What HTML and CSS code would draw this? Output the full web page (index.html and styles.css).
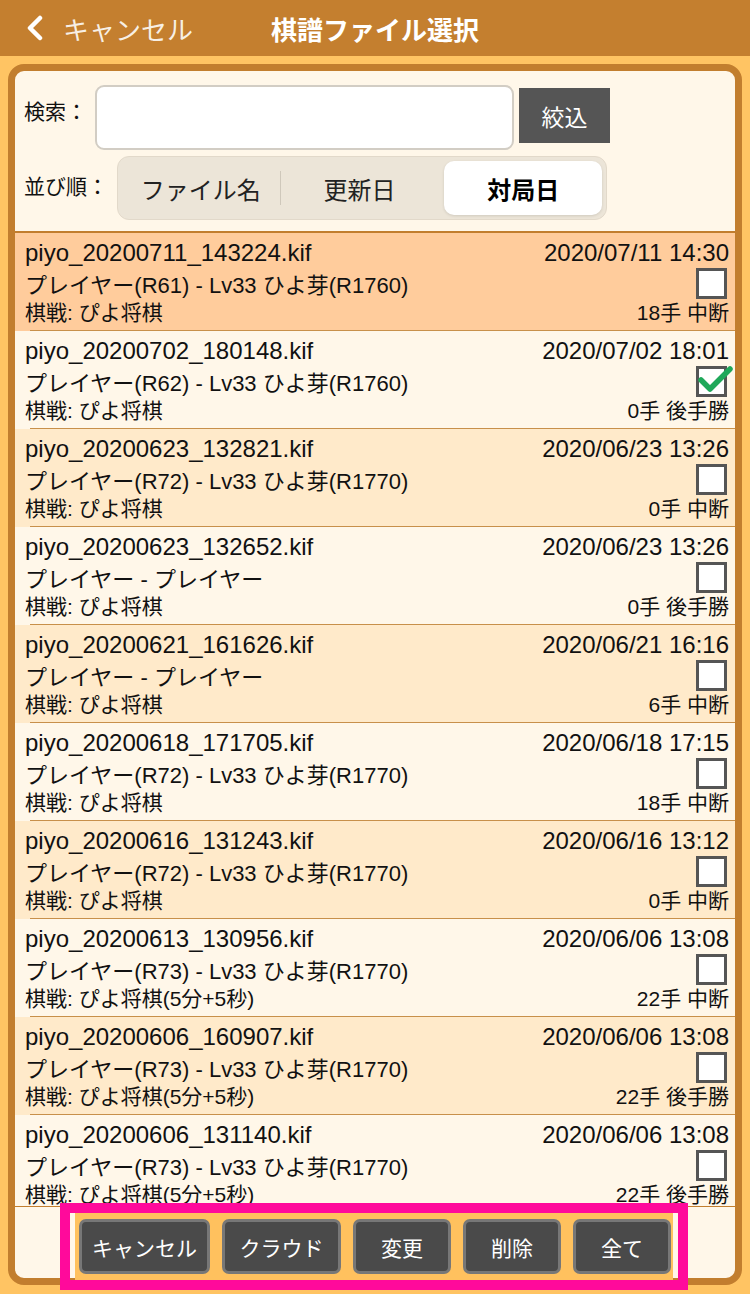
FILE: index.html
```html
<!DOCTYPE html>
<html lang="ja">

<head>
    <meta charset="UTF-8">
    <meta name="viewport" content="width=device-width, initial-scale=1.0">
    <title>棋譜ファイル選択</title>
    <link rel="stylesheet" href="styles.css">
</head>

<body>
    <div class="topbar">
        <div class="back">
            <svg class="chevron" width="20" height="26" viewBox="0 0 20 26">
                <path d="M15 3 L5 13 L15 23" fill="none" stroke="#fff" stroke-width="4.5" stroke-linecap="round" stroke-linejoin="round"/>
            </svg>
            <span>キャンセル</span>
        </div>
        <div class="title">棋譜ファイル選択</div>
        <div></div>
    </div>

    <div class="panel">
        <div class="search">
            <div class="search-row">
                <span class="label">検索：</span>
                <div class="input"></div>
                <div class="filter-btn">絞込</div>
            </div>
            <div class="sort-row">
                <span class="label sort-label">並び順：</span>
                <div class="segmented">
                    <div class="seg">ファイル名</div>
                    <div class="seg sep">更新日</div>
                    <div class="seg active">対局日</div>
                </div>
            </div>
        </div>

        <div class="list">
            <div class="row selected">
                <span class="name">piyo_20200711_143224.kif</span>
                <span class="date">2020/07/11 14:30</span>
                <span class="players">プレイヤー(R61) - Lv33 ひよ芽(R1760)</span>
                <span class="check"></span>
                <span class="event">棋戦: ぴよ将棋</span>
                <span class="result">18手 中断</span>
            </div>
            <div class="row">
                <span class="name">piyo_20200702_180148.kif</span>
                <span class="date">2020/07/02 18:01</span>
                <span class="players">プレイヤー(R62) - Lv33 ひよ芽(R1760)</span>
                <span class="check on">
                    <svg class="tick" width="36" height="30" viewBox="0 0 36 30">
                        <path d="M4 17 L13 26 L33 6" fill="none" stroke="#1fa85a" stroke-width="5.5" stroke-linecap="round" stroke-linejoin="round"/>
                    </svg>
                </span>
                <span class="event">棋戦: ぴよ将棋</span>
                <span class="result">0手 後手勝</span>
            </div>
            <div class="row alt">
                <span class="name">piyo_20200623_132821.kif</span>
                <span class="date">2020/06/23 13:26</span>
                <span class="players">プレイヤー(R72) - Lv33 ひよ芽(R1770)</span>
                <span class="check"></span>
                <span class="event">棋戦: ぴよ将棋</span>
                <span class="result">0手 中断</span>
            </div>
            <div class="row">
                <span class="name">piyo_20200623_132652.kif</span>
                <span class="date">2020/06/23 13:26</span>
                <span class="players">プレイヤー - プレイヤー</span>
                <span class="check"></span>
                <span class="event">棋戦: ぴよ将棋</span>
                <span class="result">0手 後手勝</span>
            </div>
            <div class="row alt">
                <span class="name">piyo_20200621_161626.kif</span>
                <span class="date">2020/06/21 16:16</span>
                <span class="players">プレイヤー - プレイヤー</span>
                <span class="check"></span>
                <span class="event">棋戦: ぴよ将棋</span>
                <span class="result">6手 中断</span>
            </div>
            <div class="row">
                <span class="name">piyo_20200618_171705.kif</span>
                <span class="date">2020/06/18 17:15</span>
                <span class="players">プレイヤー(R72) - Lv33 ひよ芽(R1770)</span>
                <span class="check"></span>
                <span class="event">棋戦: ぴよ将棋</span>
                <span class="result">18手 中断</span>
            </div>
            <div class="row alt">
                <span class="name">piyo_20200616_131243.kif</span>
                <span class="date">2020/06/16 13:12</span>
                <span class="players">プレイヤー(R72) - Lv33 ひよ芽(R1770)</span>
                <span class="check"></span>
                <span class="event">棋戦: ぴよ将棋</span>
                <span class="result">0手 中断</span>
            </div>
            <div class="row">
                <span class="name">piyo_20200613_130956.kif</span>
                <span class="date">2020/06/06 13:08</span>
                <span class="players">プレイヤー(R73) - Lv33 ひよ芽(R1770)</span>
                <span class="check"></span>
                <span class="event">棋戦: ぴよ将棋(5分+5秒)</span>
                <span class="result">22手 中断</span>
            </div>
            <div class="row alt">
                <span class="name">piyo_20200606_160907.kif</span>
                <span class="date">2020/06/06 13:08</span>
                <span class="players">プレイヤー(R73) - Lv33 ひよ芽(R1770)</span>
                <span class="check"></span>
                <span class="event">棋戦: ぴよ将棋(5分+5秒)</span>
                <span class="result">22手 後手勝</span>
            </div>
            <div class="row">
                <span class="name">piyo_20200606_131140.kif</span>
                <span class="date">2020/06/06 13:08</span>
                <span class="players">プレイヤー(R73) - Lv33 ひよ芽(R1770)</span>
                <span class="check"></span>
                <span class="event">棋戦: ぴよ将棋(5分+5秒)</span>
                <span class="result">22手 後手勝</span>
            </div>
        </div>
    </div>

    <div class="footer">
        <div class="toolbar">
            <div class="btn w-cancel">キャンセル</div>
            <div class="btn w-cloud">クラウド</div>
            <div class="btn">変更</div>
            <div class="btn">削除</div>
            <div class="btn">全て</div>
        </div>
    </div>
</body>

</html>
```

FILE: styles.css
```css
body {
    margin: 0;
    width: 750px;
    height: 1294px;
    overflow: hidden;
    background-color: #ffc463;
    color: #111;
    font-family: "Liberation Sans", "Noto Sans CJK JP", sans-serif;
    position: relative;
}

.topbar {
    height: 56px;
    background-color: #c47f2f;
    display: grid;
    grid-template-columns: 1fr auto 1fr;
    align-items: center;
}

.back {
    display: flex;
    align-items: center;
    padding-left: 25px;
    color: rgba(255, 255, 255, 0.88);
    font-family: "Noto Sans CJK JP", sans-serif;
    font-size: 26px;
}

.chevron {
    margin-right: 18px;
}

.title {
    color: #fff;
    font-family: "Noto Sans CJK JP", sans-serif;
    font-weight: bold;
    font-size: 26px;
}

.panel {
    margin: 8px 8px 0;
    height: 1221px;
    box-sizing: border-box;
    border: 7px solid #c27e2e;
    border-radius: 16px;
    background-color: #fff7e9;
    overflow: hidden;
}

.search {
    height: 160px;
    box-sizing: border-box;
    padding: 14px 0 0 9px;
}

.search-row,
.sort-row {
    display: flex;
    align-items: flex-start;
}

.label {
    width: 71px;
    padding-top: 10px;
    font-family: "Noto Sans CJK JP", sans-serif;
    font-size: 21px;
}

.sort-label {
    width: 93px;
    padding-top: 14px;
}

.input {
    width: 419px;
    height: 65px;
    box-sizing: border-box;
    border: 2px solid #d2cdc4;
    border-radius: 9px;
    background-color: #fff;
}

.filter-btn {
    margin: 3px 0 0 5px;
    width: 91px;
    height: 55px;
    background-color: #555;
    color: #fff;
    font-family: "Noto Sans CJK JP", sans-serif;
    font-size: 23px;
    display: flex;
    align-items: center;
    justify-content: center;
}

.sort-row {
    margin-top: 6px;
}

.segmented {
    width: 490px;
    height: 64px;
    box-sizing: border-box;
    padding: 4px;
    border: 1px solid #e2d9ca;
    border-radius: 12px;
    background-color: #ece5d8;
    display: flex;
}

.seg {
    flex: 1;
    display: flex;
    align-items: center;
    justify-content: center;
    font-family: "Noto Sans CJK JP", sans-serif;
    font-size: 24px;
    color: #222;
}

.seg.sep {
    border-left: 1px solid #cfc8bb;
    margin: 10px 0;
}

.seg.active {
    margin-left: 6px;
    background-color: #fff;
    border-radius: 10px;
    font-weight: bold;
    color: #000;
    box-shadow: 0 1px 3px rgba(0, 0, 0, 0.12);
}

.list {
    height: 976px;
    box-sizing: border-box;
    border-top: 2px solid #c27e2e;
    border-bottom: 1px solid #c27e2e;
    overflow: hidden;
}

.row {
    height: 98px;
    box-sizing: border-box;
    padding: 4px 6px 0 10px;
    display: grid;
    grid-template-columns: 1fr auto;
    grid-template-rows: 31px 29px 27px;
    align-items: center;
    background: linear-gradient(#c8904a, #c8904a) no-repeat 15px 100% / calc(100% - 15px) 1px, #fff7e9;
}

.row.alt {
    background: linear-gradient(#c8904a, #c8904a) no-repeat 15px 100% / calc(100% - 15px) 1px, #ffeaca;
}

.row.selected {
    background: linear-gradient(#c8904a, #c8904a) no-repeat 15px 100% / calc(100% - 15px) 1px, #ffcc9c;
}

.name,
.date {
    font-size: 24px;
    white-space: nowrap;
}

.date {
    text-align: right;
}

.players {
    font-size: 22px;
    white-space: nowrap;
}

.event,
.result {
    font-size: 21px;
    white-space: nowrap;
}

.result {
    text-align: right;
}

.check {
    justify-self: end;
    margin: 2px 2px 0 0;
    width: 31px;
    height: 31px;
    box-sizing: border-box;
    border: 3px solid #555;
    background-color: #fff;
    position: relative;
}

.tick {
    position: absolute;
    left: -2px;
    top: -6px;
}

.footer {
    position: absolute;
    left: 60px;
    top: 1203px;
    width: 628px;
    height: 87px;
    box-sizing: border-box;
    border: 10px solid #ff0a9b;
    padding: 0 5px;
}

.toolbar {
    height: 100%;
    box-sizing: border-box;
    padding-left: 4px;
    background-color: #ffc15e;
    display: flex;
    align-items: center;
    gap: 12px;
}

.btn {
    width: 98px;
    height: 55px;
    box-sizing: border-box;
    border: 3px solid #777;
    border-radius: 7px;
    background-color: #4a4a4a;
    color: #fff;
    font-family: "Noto Sans CJK JP", sans-serif;
    font-size: 21px;
    display: flex;
    align-items: center;
    justify-content: center;
}

.w-cancel {
    width: 131px;
}

.w-cloud {
    width: 119px;
}
```
